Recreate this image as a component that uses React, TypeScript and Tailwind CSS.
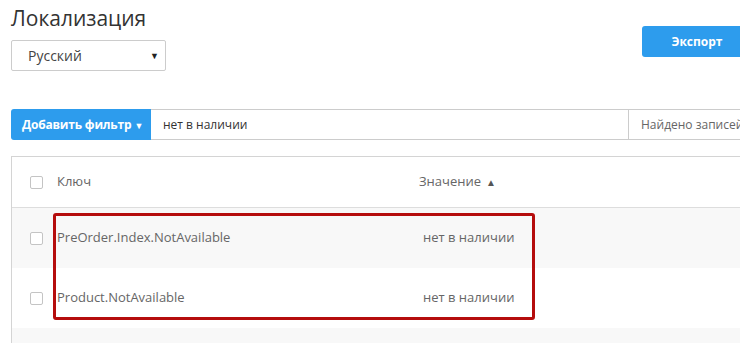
import * as React from 'react';

const rows = [
  { key: 'PreOrder.Index.NotAvailable', value: 'нет в наличии' },
  { key: 'Product.NotAvailable', value: 'нет в наличии' },
  { key: '', value: '' },
];

function Checkbox() {
  return <span className="block w-[13px] h-[13px] border border-[#c4c4c4] rounded-[2px] bg-white flex-shrink-0" />;
}

export default function App() {
  return (
    <div className="relative w-[740px] h-[343px] overflow-hidden bg-white font-['Open_Sans',sans-serif] text-[#333]">
      <div className="w-[820px] pl-[11px]">
        {/* Header: title, language select, export */}
        <div className="flex">
          <div className="w-[631px] pt-[4px]">
            <h1 className="text-[21px] leading-[29px] font-normal text-[#333]">Локализация</h1>
            <div className="mt-[7px] w-[155px] h-[31px] border border-[#ccc] rounded-[2px] flex items-center justify-between pl-[16px] pr-[6px]">
              <span className="text-[14px] text-[#444]">Русский</span>
              <span className="text-[9px] text-[#222]">▼</span>
            </div>
          </div>
          <div className="mt-[26px] w-[110px] h-[31px] rounded-[3px] bg-[#2d9ced] flex items-center justify-center text-white text-[12px] font-bold">
            Экспорт
          </div>
        </div>

        {/* Filter bar */}
        <div className="mt-[38px] flex h-[31px]">
          <div className="w-[140px] rounded-l-[3px] bg-[#2d9ced] flex items-center pl-[11px] text-white text-[12px] font-bold tracking-[-0.2px] gap-[3px]">
            Добавить фильтр
            <span className="text-[9px] leading-none mt-[1px]">▼</span>
          </div>
          <div className="w-[477px] border-y border-[#ccc] flex items-center pl-[12px] text-[12px] text-[#333]">
            нет в наличии
          </div>
          <div className="flex-1 border-y border-l border-[#ccc] flex items-center pl-[12px] text-[12px] text-[#666] whitespace-nowrap">
            Найдено записей
          </div>
        </div>

        {/* Table */}
        <div className="mt-[16px] border-t border-l border-[#d4d4d4]">
          <div className="h-[51px] flex items-center border-b border-[#ddd] bg-white text-[13px] text-[#666]">
            <div className="pl-[18px] w-[45px]">
              <Checkbox />
            </div>
            <div className="w-[362px]">Ключ</div>
            <div className="flex items-center gap-[5px]">
              Значение
              <span className="text-[10px] text-[#555]">▲</span>
            </div>
          </div>
          {rows.map((r, i) => (
            <div
              key={i}
              className={(i % 2 === 0 ? 'bg-[#f8f8f8]' : 'bg-white') + ' h-[60px] flex items-center text-[13px] text-[#666]'}
            >
              {r.key && (
                <>
                  <div className="pl-[18px] w-[45px]">
                    <Checkbox />
                  </div>
                  <div className="w-[366px]">{r.key}</div>
                  <div>{r.value}</div>
                </>
              )}
            </div>
          ))}
        </div>
      </div>

      {/* annotation frame */}
      <div className="absolute left-[53px] top-[213px] w-[482px] h-[107px] border-[3px] border-[#b50d0d] rounded-[3px]" />
    </div>
  );
}
